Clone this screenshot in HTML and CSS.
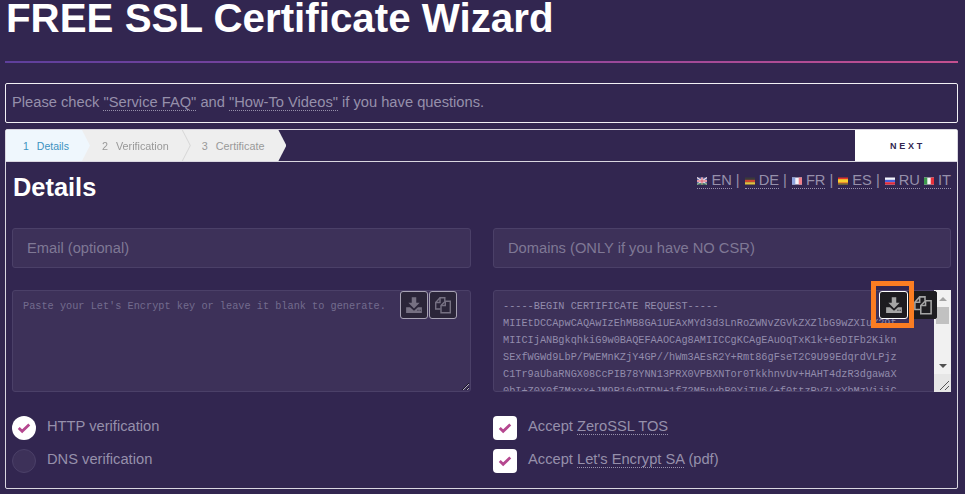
FILE: index.html
```html
<!DOCTYPE html>
<html lang="en">
<head>
<meta charset="utf-8">
<title>FREE SSL Certificate Wizard</title>
<link rel="stylesheet" href="styles.css">
</head>
<body>
<svg class="defs" width="0" height="0" aria-hidden="true">
  <symbol id="i-download" viewBox="0 0 16 16"><path d="M6 1h4v5h3l-5 5-5-5h3z" fill="currentColor"/><path d="M1 10h3.500l3.500 3 3.500-3H15v5H1z" fill="currentColor"/><path d="M11 12.700h1M13 12.700h1" stroke="#24222b" stroke-width="1"/></symbol>
  <symbol id="i-copy" viewBox="0 0 18 18"><path d="M6.500 13H1.700V6.500L6 1.700h4.800v3.500" fill="none" stroke="currentColor" stroke-width="1.400"/><path d="M6 1.700v4.800H1.700" fill="none" stroke="currentColor" stroke-width="1.400"/><path d="M7 9.500L11.300 5.200h5v11.600H7z" fill="none" stroke="currentColor" stroke-width="1.400"/><path d="M11.300 5.200v4.300H7" fill="none" stroke="currentColor" stroke-width="1.400"/></symbol>
  <symbol id="i-check" viewBox="0 0 16 16"><path d="M2 8l3.900 3.700L14 4" fill="none" stroke="currentColor" stroke-width="3.200"/></symbol>
</svg>

<h1 class="title">FREE SSL Certificate Wizard</h1>
<div class="rule"></div>
<p class="notice">Please check <a href="#">"Service FAQ"</a> and <a href="#">"How-To Videos"</a> if you have questions.</p>

<section class="wizard">
  <div class="wizard-bar">
    <ol class="steps">
      <li class="step step-current"><span class="step-shape"><span class="step-num">1</span>Details</span></li>
      <li class="step step-middle"><span class="step-shape"><span class="step-num">2</span>Verification</span></li>
      <li class="step step-last"><span class="step-shape"><span class="step-num">3</span>Certificate</span></li>
    </ol>
    <button class="next" type="button">NEXT</button>
  </div>

  <div class="wizard-body">
    <div class="head-row">
      <h2 class="heading">Details</h2>
      <div class="langs">
        <a href="#"><svg class="flag" viewBox="0 0 10 7"><rect width="10" height="7" fill="#5a6aa8"/><path d="M0 0l10 7M10 0L0 7" stroke="#f3dde2" stroke-width="1.200"/><path d="M5 0v7M0 3.500h10" stroke="#f3dde2" stroke-width="2.200"/><path d="M5 0v7M0 3.500h10" stroke="#d8566a" stroke-width="1"/><rect y="6" width="10" height="1" fill="#3f8a4e"/></svg>EN</a> <span class="sep">|</span>
        <a href="#"><svg class="flag" viewBox="0 0 10 7"><rect width="10" height="7" fill="#3a3a3a"/><rect y="2.300" width="10" height="2.400" fill="#c9452f"/><rect y="4.700" width="10" height="2.300" fill="#e0c040"/></svg>DE</a> <span class="sep">|</span>
        <a href="#"><svg class="flag" viewBox="0 0 10 7"><rect width="10" height="7" fill="#f2f2fa"/><rect width="3.300" height="7" fill="#8ea4e0"/><rect x="6.700" width="3.300" height="7" fill="#f0808a"/></svg>FR</a> <span class="sep">|</span>
        <a href="#"><svg class="flag" viewBox="0 0 10 7"><rect width="10" height="7" fill="#e0352b"/><rect y="1.700" width="10" height="3.400" fill="#f6d02f"/><rect y="6" width="10" height="1" fill="#4a9a3e"/></svg>ES</a> <span class="sep">|</span>
        <a href="#"><svg class="flag" viewBox="0 0 10 7"><rect width="10" height="7" fill="#f4f4fa"/><rect y="2.300" width="10" height="2.400" fill="#4a5fd8"/><rect y="4.700" width="10" height="2.300" fill="#e0283a"/></svg>RU</a>
        <a href="#"><svg class="flag" viewBox="0 0 10 7"><rect width="10" height="7" fill="#f4f4f4"/><rect width="3.300" height="7" fill="#3c9a4e"/><rect x="6.700" width="3.300" height="7" fill="#e8303a"/></svg>IT</a>
      </div>
    </div>

    <div class="form-grid">
      <input class="field" type="text" placeholder="Email (optional)">
      <input class="field" type="text" placeholder="Domains (ONLY if you have NO CSR)">

      <div class="area-wrap">
        <textarea class="area" placeholder="Paste your Let's Encrypt key or leave it blank to generate."></textarea>
        <div class="tools tools-off">
          <button class="tool" type="button"><svg class="tool-icon"><use href="#i-download"/></svg></button>
          <button class="tool" type="button"><svg class="tool-icon"><use href="#i-copy"/></svg></button>
        </div>
      </div>

      <div class="area-wrap">
        <textarea class="area area-csr" spellcheck="false">-----BEGIN CERTIFICATE REQUEST-----
MIIEtDCCApwCAQAwIzEhMB8GA1UEAxMYd3d3LnRoZWNvZGVkZXZlbG9wZXIuY29t
MIICIjANBgkqhkiG9w0BAQEFAAOCAg8AMIICCgKCAgEAuOqTxK1k+6eDIFb2Kikn
SExfWGWd9LbP/PWEMnKZjY4GP//hWm3AEsR2Y+Rmt86gFseT2C9U99EdqrdVLPjz
C1Tr9aUbaRNGX08CcPIB78YNN13PRX0VPBXNTor0TkkhnvUv+HAHT4dzR3dgawaX
0bI+Z0X0f7Mxxx+JM9R16yDTDN+1f72M5uvhB0YiTU6/+f0ttzRyZLxYbMzVijjC
-----END CERTIFICATE REQUEST-----</textarea>
        <div class="scrollbar" aria-hidden="true">
          <span class="scroll-btn"><span class="arrow-up"></span></span>
          <span class="scroll-thumb"></span>
          <span class="scroll-track"></span>
          <span class="scroll-btn"><span class="arrow-down"></span></span>
          <span class="scroll-corner"><svg class="grip" viewBox="0 0 17 18"><path d="M6 16L15 7M11 16l4-4" stroke="#555" stroke-width="1"/></svg></span>
        </div>
        <div class="tools tools-on">
          <button class="tool tool-framed" type="button"><svg class="tool-icon"><use href="#i-download"/></svg></button>
          <button class="tool tool-plain" type="button"><svg class="tool-icon tool-icon-copy"><use href="#i-copy"/></svg></button>
        </div>
        <div class="callout"></div>
      </div>

      <div class="options">
        <label class="option"><span class="mark mark-round mark-on"><svg class="check"><use href="#i-check"/></svg></span>HTTP verification</label>
        <label class="option"><span class="mark mark-round"></span>DNS verification</label>
      </div>
      <div class="options">
        <label class="option"><span class="mark mark-on"><svg class="check"><use href="#i-check"/></svg></span><span>Accept <a href="#">ZeroSSL TOS</a></span></label>
        <label class="option"><span class="mark mark-on"><svg class="check"><use href="#i-check"/></svg></span><span>Accept <a href="#">Let's Encrypt SA</a> (pdf)</span></label>
      </div>
    </div>
  </div>
</section>
</body>
</html>
```

FILE: styles.css
```css
* { box-sizing: border-box; }

html, body { height: 100%; }

body {
  margin: 0;
  padding: 0 7px 0 5px;
  overflow: hidden;
  background: #322650;
  color: #9690ab;
  font-family: "Liberation Sans", Arial, sans-serif;
  font-size: 14.700px;
}

.defs { display: block; height: 0; }

a { color: inherit; text-decoration: none; border-bottom: 1px dotted #9690ab; }

.title {
  margin: 0;
  padding-left: 1px;
  height: 61px;
  color: #fff;
  font-size: 40.300px;
  font-weight: 700;
  line-height: 37px;
}

.rule {
  height: 2px;
  background: linear-gradient(90deg, #5e3f9c 0%, #8a459e 50%, #c4508f 100%);
}

.notice {
  height: 40px;
  margin: 20px 0 6px;
  padding: 0 6px;
  border: 1px solid #f2f0f5;
  border-radius: 2px;
  line-height: 37px;
}

.wizard {
  height: 360px;
  border: 1px solid #d9d6e0;
  border-radius: 2px;
}

.wizard-bar {
  display: flex;
  justify-content: space-between;
  height: 32px;
  border-bottom: 1px solid #d9d6e0;
}

.steps {
  display: flex;
  margin: 0;
  padding: 0;
  list-style: none;
}

.step {
  position: relative;
  margin-right: -8px;
  font-size: 10.800px;
}

.step-shape {
  display: flex;
  align-items: center;
  height: 31px;
  padding: 0 21px 0 20px;
  background: #eee;
  color: #999;
  clip-path: polygon(0 0, calc(100% - 8px) 0, 100% 50%, calc(100% - 8px) 100%, 0 100%);
}

.step-current { z-index: 3; font-size: 10.500px; }

.step-current .step-shape {
  padding-left: 17px;
  background: #eff7fd;
  color: #3c92c0;
}

.step-middle { z-index: 2; filter: drop-shadow(1px 0 0 #d6d6d6); }

.step-last { z-index: 1; }

.step-last .step-shape { padding-right: 22px; }

.step-num { margin-right: 8px; }

.next {
  width: 102px;
  height: 31px;
  padding: 0 0 0 3px;
  border: 0;
  background: #fff;
  color: #322650;
  font-family: inherit;
  font-size: 9px;
  font-weight: 700;
  letter-spacing: 2.800px;
}

.wizard-body { padding: 0 6px; }

.head-row {
  display: flex;
  justify-content: space-between;
  height: 66px;
}

.heading {
  margin: 11px 0 0 1px;
  color: #fff;
  font-size: 25.400px;
  font-weight: 700;
  line-height: 28px;
}

.langs {
  display: flex;
  align-items: baseline;
  gap: 4px;
  height: 17px;
  margin-top: 10px;
  font-size: 14.700px;
  line-height: 16px;
}

.sep { margin-right: 1px; color: #9690ab; }

.flag { width: 10px; height: 8px; margin-right: 4px; }

.form-grid {
  display: grid;
  grid-template-columns: 459px 458px;
  column-gap: 22px;
  row-gap: 22px;
}

.field {
  height: 40px;
  padding: 0 14px;
  border: 1px solid #4b4068;
  border-radius: 3px;
  background: #3d3159;
  color: #9690ab;
  font-family: inherit;
  font-size: 14.700px;
  outline: none;
}

.field::placeholder { color: #7f7895; opacity: 1; }

.area-wrap { position: relative; height: 102px; }

.area {
  display: block;
  width: 100%;
  height: 102px;
  padding: 7px 10px;
  border: 1px solid #4b4068;
  border-radius: 3px;
  background: #3d3159;
  color: #928cac;
  font-family: "Liberation Mono", "Courier New", monospace;
  font-size: 10.250px;
  line-height: 17px;
  white-space: pre;
  overflow: auto;
  resize: both;
  outline: none;
}

.area::placeholder { color: #736c8e; opacity: 1; }

.area-csr { padding-left: 9px; overflow: hidden; resize: none; }

.scrollbar {
  position: absolute;
  top: 0;
  right: 0;
  display: flex;
  flex-direction: column;
  width: 17px;
  height: 102px;
  background: #f1f1f1;
}

.scroll-btn {
  display: flex;
  align-items: center;
  justify-content: center;
  flex: none;
  height: 17px;
}

.arrow-up,
.arrow-down {
  width: 0;
  height: 0;
  border-right: 4px solid transparent;
  border-left: 4px solid transparent;
}

.arrow-up { border-bottom: 4px solid #a3a3a3; }
.arrow-down { border-top: 4px solid #505050; }

.scroll-thumb {
  flex: none;
  height: 17px;
  margin: 0 2px;
  background: #c1c1c1;
}

.scroll-track { flex: 1; }

.scroll-corner {
  display: block;
  flex: none;
  height: 18px;
  background: #e6e6e6;
}

.grip { display: block; width: 17px; height: 18px; }

.tools {
  position: absolute;
  top: 1px;
  right: 14px;
  display: flex;
}

.tools-off { gap: 1px; opacity: 0.55; }

.tool {
  display: flex;
  align-items: center;
  justify-content: center;
  width: 28px;
  height: 28px;
  padding: 0;
  border: 1px solid #fff;
  border-radius: 3px;
  background: #1d1c20;
  color: #a5a5a5;
}

.tool-framed { width: 29px; }

.tool-plain { width: 29px; border-color: #1d1c20; border-radius: 0 2px 2px 0; }

.tool-icon { width: 18px; height: 18px; }

.tool-icon-copy { width: 20px; height: 20px; }

.callout {
  position: absolute;
  top: -9px;
  right: 37px;
  width: 43px;
  height: 47px;
  border: 5px solid #fb7d22;
  pointer-events: none;
}

.options {
  display: flex;
  flex-direction: column;
  gap: 9px;
  margin-top: 2px;
}

.option {
  display: flex;
  align-items: flex-start;
  gap: 11px;
  height: 24px;
  line-height: 20px;
}

.mark {
  display: flex;
  align-items: center;
  justify-content: center;
  flex: none;
  width: 24px;
  height: 24px;
  border-radius: 4px;
}

.mark-round {
  border: 1px solid #4b4068;
  border-radius: 50%;
  background: #3d3159;
}

.mark-on { border: 0; background: #fff; color: #b5478f; }

.check { width: 14px; height: 14px; }
```
